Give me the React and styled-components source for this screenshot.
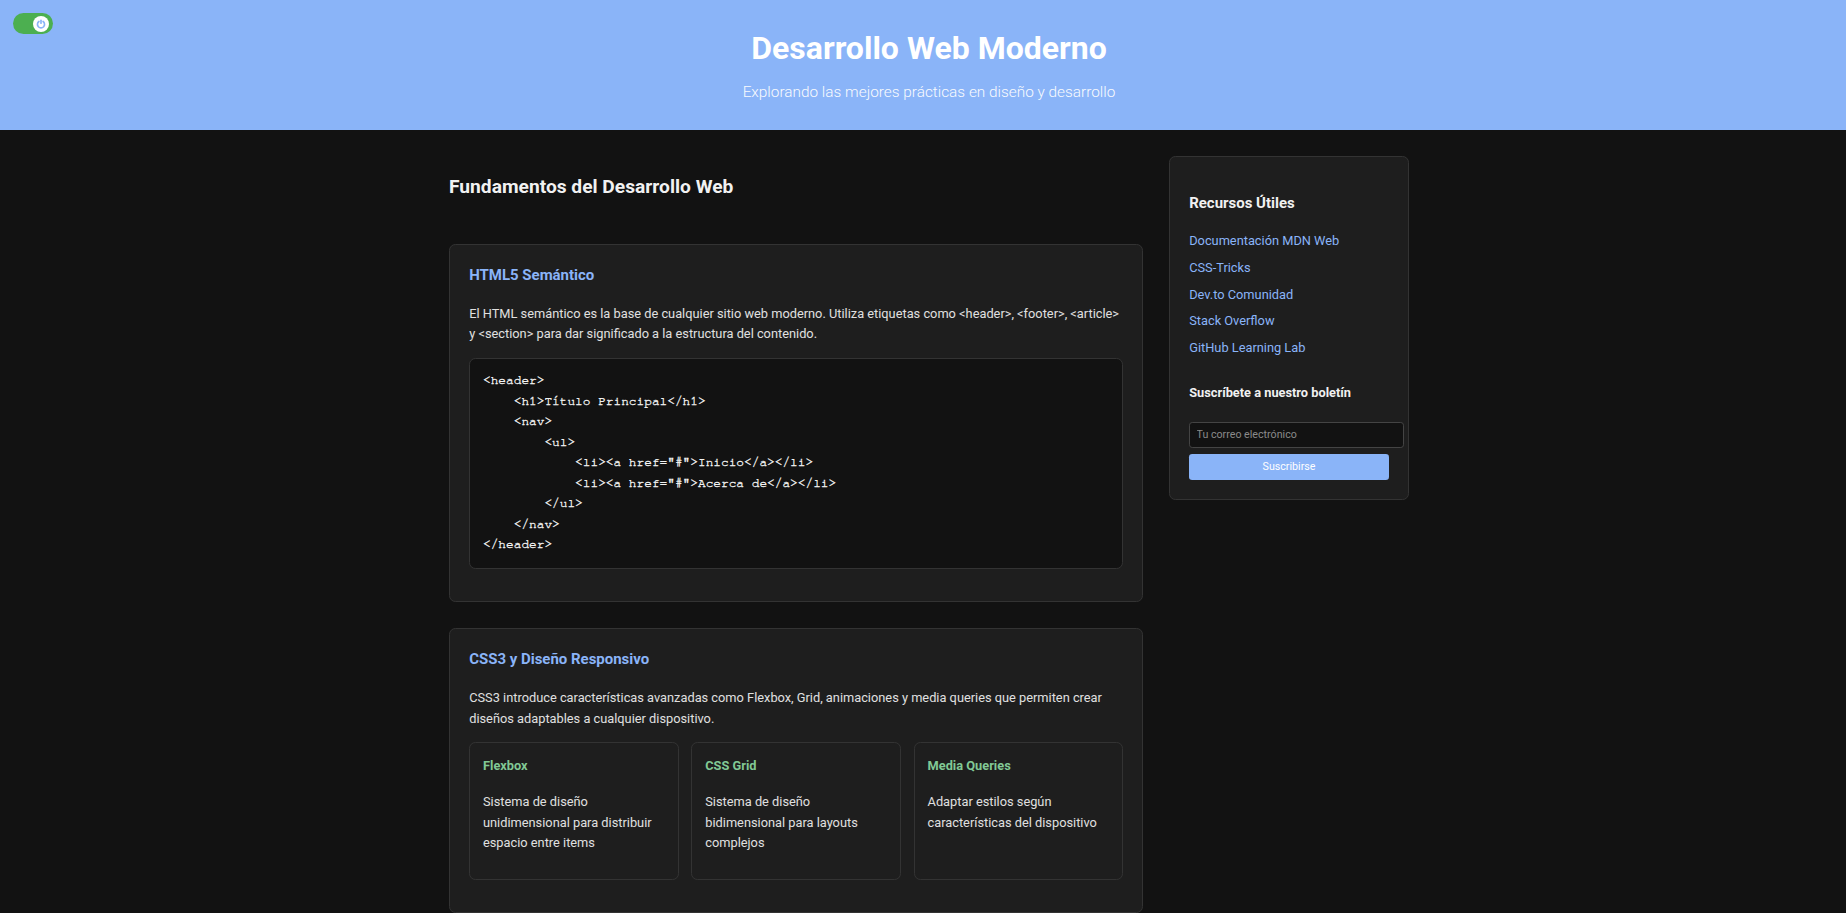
import React from 'react';
import styled, { createGlobalStyle } from 'styled-components';

const GlobalStyle = createGlobalStyle`
  html, body {
    margin: 0;
    padding: 0;
    background: #121212;
  }
  body {
    font-family: Roboto, "Liberation Sans", Arial, sans-serif;
    font-size: 12.8px;
    line-height: 1.6;
    color: #e0e0e0;
  }
  *, *::before, *::after { box-sizing: border-box; }
`;

const Toggle = styled.button`
  position: fixed;
  top: 12.8px;
  left: 12.8px;
  width: 40px;
  height: 21.6px;
  border: none;
  border-radius: 10.8px;
  background: #4caf50;
  padding: 0;
  cursor: pointer;
  z-index: 10;
`;

const Knob = styled.span`
  position: absolute;
  top: 2.8px;
  right: 3.4px;
  width: 16px;
  height: 16px;
  border-radius: 50%;
  background: #fff;
  display: flex;
  align-items: center;
  justify-content: center;
`;

const Header = styled.header`
  background: #8ab4f8;
  color: #fff;
  text-align: center;
  padding: 29px 16px 25.3px 28px;
`;

const Title = styled.h1`
  margin: 0;
  font-size: 32px;
  line-height: 38.4px;
  font-weight: 700;
`;

const Subtitle = styled.p`
  margin: 13px 0 0;
  font-size: 15.36px;
  line-height: 24.3px;
  font-weight: 300;
  opacity: 0.95;
`;

const Layout = styled.div`
  max-width: 972px;
  margin: 25.6px auto 0;
  padding-left: 12px;
  display: grid;
  grid-template-columns: 1fr 240px;
  gap: 25.6px;
  align-items: start;
`;

const MainColumn = styled.main`
  display: flex;
  flex-direction: column;
  gap: 25.6px;
  min-width: 0;
`;

const SectionTitle = styled.h2`
  margin: 16.9px 0 14.9px;
  font-size: 19.2px;
  line-height: 30.72px;
  font-weight: 700;
  color: #f1f1f1;
`;

const Card = styled.article`
  background: #1e1e1e;
  border: 1px solid #333;
  border-radius: 6.4px;
  padding: 19.2px;
`;

const CardTitle = styled.h3`
  margin: 0 0 15.9px;
  font-size: 14.98px;
  line-height: 1.6;
  font-weight: 700;
  color: #8ab4f8;
`;

const Text = styled.p`
  margin: 0 0 12.8px;
  font-size: 12.8px;
  line-height: 20.48px;
  color: #e0e0e0;
`;

const CodeBlock = styled.pre`
  margin: 12.8px 0;
  padding: 12.8px;
  background: #121212;
  border: 1px solid #333;
  border-radius: 6.4px;
  font-family: "Nimbus Mono PS", "Nimbus Mono L", FreeMono, "Courier New", "Liberation Mono", monospace;
  font-size: 12.8px;
  line-height: 20.48px;
  color: #f2f2f2;
  -webkit-text-stroke: 0.35px #f2f2f2;
  white-space: pre;
  overflow-x: auto;
`;

const FeatureGrid = styled.div`
  display: grid;
  grid-template-columns: repeat(3, 1fr);
  gap: 12.8px;
  margin: 12.8px 0;
`;

const FeatureBox = styled.div`
  border: 1px solid #333;
  border-radius: 6.4px;
  padding: 12.8px;
`;

const FeatureTitle = styled.h4`
  margin: 0 0 16px;
  font-size: 12.8px;
  line-height: 20.48px;
  font-weight: 700;
  color: #81c995;
`;

const Sidebar = styled.aside`
  background: #1e1e1e;
  border: 1px solid #333;
  border-radius: 6.4px;
  padding: 19.2px;
`;

const SideTitle = styled.h3`
  margin: 14.8px 0 16.2px;
  font-size: 14.98px;
  line-height: 24px;
  font-weight: 700;
  color: #f1f1f1;
`;

const LinkList = styled.ul`
  list-style: none;
  margin: 0;
  padding: 0;
  display: flex;
  flex-direction: column;
  gap: 6.4px;
`;

const LinkItem = styled.li`
  font-size: 12.8px;
  line-height: 20.48px;
`;

const Link = styled.a`
  color: #8ab4f8;
  text-decoration: none;
`;

const NewsTitle = styled.h4`
  margin: 24.7px 0 17.9px;
  font-size: 12.8px;
  line-height: 20.48px;
  font-weight: 700;
  color: #f1f1f1;
`;

const EmailInput = styled.input`
  display: block;
  box-sizing: content-box;
  width: 100%;
  padding: 5.8px 6.4px;
  margin: 0;
  background: #121212;
  border: 1px solid #444;
  border-radius: 3.2px;
  color: #e0e0e0;
  font-family: Roboto, "Liberation Sans", Arial, sans-serif;
  font-size: 10.67px;
  line-height: 12.5px;
  outline: none;
  &::placeholder { color: #8a8a8a; }
`;

const SubscribeButton = styled.button`
  display: block;
  width: 100%;
  margin-top: 6.4px;
  padding: 6.4px 0;
  background: #8ab4f8;
  color: #fff;
  border: none;
  border-radius: 3.2px;
  font-family: Roboto, "Liberation Sans", Arial, sans-serif;
  font-size: 10.67px;
  line-height: 12.5px;
  cursor: pointer;
`;

const code = `<header>
    <h1>Título Principal</h1>
    <nav>
        <ul>
            <li><a href="#">Inicio</a></li>
            <li><a href="#">Acerca de</a></li>
        </ul>
    </nav>
</header>`;

const features = [
  { title: 'Flexbox', text: 'Sistema de diseño unidimensional para distribuir espacio entre items' },
  { title: 'CSS Grid', text: 'Sistema de diseño bidimensional para layouts complejos' },
  { title: 'Media Queries', text: 'Adaptar estilos según características del dispositivo' },
];

const links = [
  'Documentación MDN Web',
  'CSS-Tricks',
  'Dev.to Comunidad',
  'Stack Overflow',
  'GitHub Learning Lab',
];

function PowerIcon() {
  return (
    <svg width="10" height="10" viewBox="0 0 24 24" fill="none" stroke="#8ab4f8" strokeWidth="4" strokeLinecap="round">
      <path d="M7 6a8.5 8.5 0 1 0 10 0" />
      <path d="M12 3v7" />
    </svg>
  );
}

export default function App() {
  return (
    <>
      <GlobalStyle />
      <Toggle aria-label="Cambiar tema">
        <Knob><PowerIcon /></Knob>
      </Toggle>
      <Header>
        <Title>Desarrollo Web Moderno</Title>
        <Subtitle>Explorando las mejores prácticas en diseño y desarrollo</Subtitle>
      </Header>
      <Layout>
        <MainColumn>
          <SectionTitle>Fundamentos del Desarrollo Web</SectionTitle>
          <Card>
            <CardTitle>HTML5 Semántico</CardTitle>
            <Text>
              El HTML semántico es la base de cualquier sitio web moderno. Utiliza etiquetas como &lt;header&gt;, &lt;footer&gt;, &lt;article&gt; y &lt;section&gt; para dar significado a la estructura del contenido.
            </Text>
            <CodeBlock>{code}</CodeBlock>
          </Card>
          <Card>
            <CardTitle>CSS3 y Diseño Responsivo</CardTitle>
            <Text>
              CSS3 introduce características avanzadas como Flexbox, Grid, animaciones y media queries que permiten crear diseños adaptables a cualquier dispositivo.
            </Text>
            <FeatureGrid>
              {features.map((f) => (
                <FeatureBox key={f.title}>
                  <FeatureTitle>{f.title}</FeatureTitle>
                  <Text>{f.text}</Text>
                </FeatureBox>
              ))}
            </FeatureGrid>
          </Card>
        </MainColumn>
        <Sidebar>
          <SideTitle>Recursos Útiles</SideTitle>
          <LinkList>
            {links.map((l) => (
              <LinkItem key={l}><Link href="#">{l}</Link></LinkItem>
            ))}
          </LinkList>
          <NewsTitle>Suscríbete a nuestro boletín</NewsTitle>
          <EmailInput type="email" placeholder="Tu correo electrónico" />
          <SubscribeButton>Suscribirse</SubscribeButton>
        </Sidebar>
      </Layout>
    </>
  );
}
